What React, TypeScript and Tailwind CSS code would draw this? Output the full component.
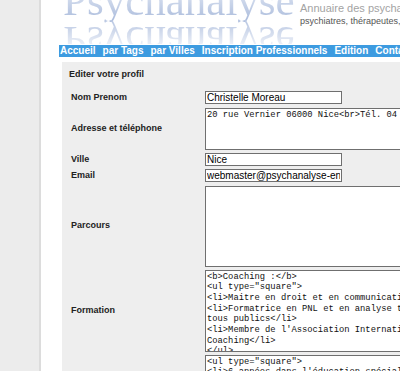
import React from "react";

const navItems = ["Accueil", "par Tags", "par Villes", "Inscription Professionnels", "Edition", "Contact"];

const formation = `<b>Coaching :</b>
<ul type="square">
<li>Maitre en droit et en communication</li>
<li>Formatrice en PNL et en analyse transactionnelle
tous publics</li>
<li>Membre de l'Association Internationale de
Coaching</li>
</ul>`;

const suite = `<ul type="square">
<li>6 années dans l'éducation spécialisée</li>
<li>Consultante en entreprise</li>`;

const inputCls =
  "h-[13px] w-[137px] border border-[#6f6f6f] bg-white px-[1px] text-[10px] leading-[11px] text-black outline-none";
const areaCls =
  "w-[300px] shrink-0 resize-none overflow-hidden whitespace-pre border border-[#6f6f6f] bg-white px-[1px] pt-[1px] font-['Liberation_Mono',monospace] text-[8.8px] leading-[10.7px] text-[#111] outline-none";

function Row({ label, children }: { label: string; children: React.ReactNode }) {
  return (
    <div className="flex items-center">
      <div className="w-[134px] shrink-0 text-[9px] font-bold text-[#222]">{label}</div>
      {children}
    </div>
  );
}

export default function App() {
  return (
    <div
      className="flex h-[371px] w-[400px] overflow-hidden bg-white"
      style={{ fontFamily: '"Liberation Sans", Arial, sans-serif' }}
    >
      <div className="w-[41px] shrink-0 border-r-2 border-[#dcdcdc] bg-[#ececec]" />

      <div className="min-w-0 flex-1">
        {/* logo */}
        <div className="relative h-[45px] overflow-hidden">
          <div
            className="absolute left-[22px] top-[-21px] whitespace-nowrap bg-linear-to-b from-[#f3f6fb] to-[#a9badb] bg-clip-text text-[43px] leading-none text-transparent"
            style={{ fontFamily: '"Liberation Serif", serif' }}
          >
            Psychanalyse
          </div>
          <div className="absolute left-[22px] top-[20px] h-[24px] overflow-hidden">
            <div
              className="-scale-y-100 whitespace-nowrap bg-linear-to-b from-[#ffffff] from-20% to-[#b9c7e2] bg-clip-text text-[43px] leading-none text-transparent"
              style={{ fontFamily: '"Liberation Serif", serif' }}
            >
              Psychanalyse
            </div>
          </div>
          <div className="absolute left-[259px] top-[2px] whitespace-nowrap">
            <div className="text-[11px] leading-[12px] text-[#a3a3a3]">Annuaire des psychanalystes,</div>
            <div className="mt-[2px] text-[9px] leading-[10px] text-[#555]">psychiatres, thérapeutes, psychologues</div>
          </div>
        </div>

        {/* nav */}
        <div className="ml-[18px] flex h-[12px] items-center gap-[7px] overflow-hidden whitespace-nowrap bg-[#3d9be0] pl-[1px] text-[10px] font-bold leading-[12px] text-white">
          {navItems.map((n) => (
            <span key={n} className="shrink-0">
              {n}
            </span>
          ))}
        </div>

        {/* panel */}
        <div className="ml-[21px] mt-[5px] h-[400px] bg-[#eeeeee] pt-[6px]">
          <div className="pl-[7px] text-[9px] font-bold leading-[12px] text-[#222]">Editer votre profil</div>

          <div className="mt-[11px] flex flex-col gap-[3px] pl-[9px]">
            <Row label="Nom Prenom">
              <input className={inputCls} defaultValue="Christelle Moreau" />
            </Row>
            <Row label="Adresse et téléphone">
              <textarea
                className={`${areaCls} h-[42px]`}
                defaultValue={"20 rue Vernier 06000 Nice<br>Tél. 04 93 88 12 45"}
              />
            </Row>
            <Row label="Ville">
              <input className={inputCls} defaultValue="Nice" />
            </Row>
            <Row label="Email">
              <input className={inputCls} defaultValue="webmaster@psychanalyse-en-ligne.org" />
            </Row>
            <Row label="Parcours">
              <textarea className={`${areaCls} h-[81px]`} defaultValue="" />
            </Row>
            <Row label="Formation">
              <textarea className={`${areaCls} h-[82px]`} defaultValue={formation} />
            </Row>
            <Row label="">
              <textarea className={`${areaCls} h-[82px]`} defaultValue={suite} />
            </Row>
          </div>
        </div>
      </div>
    </div>
  );
}
